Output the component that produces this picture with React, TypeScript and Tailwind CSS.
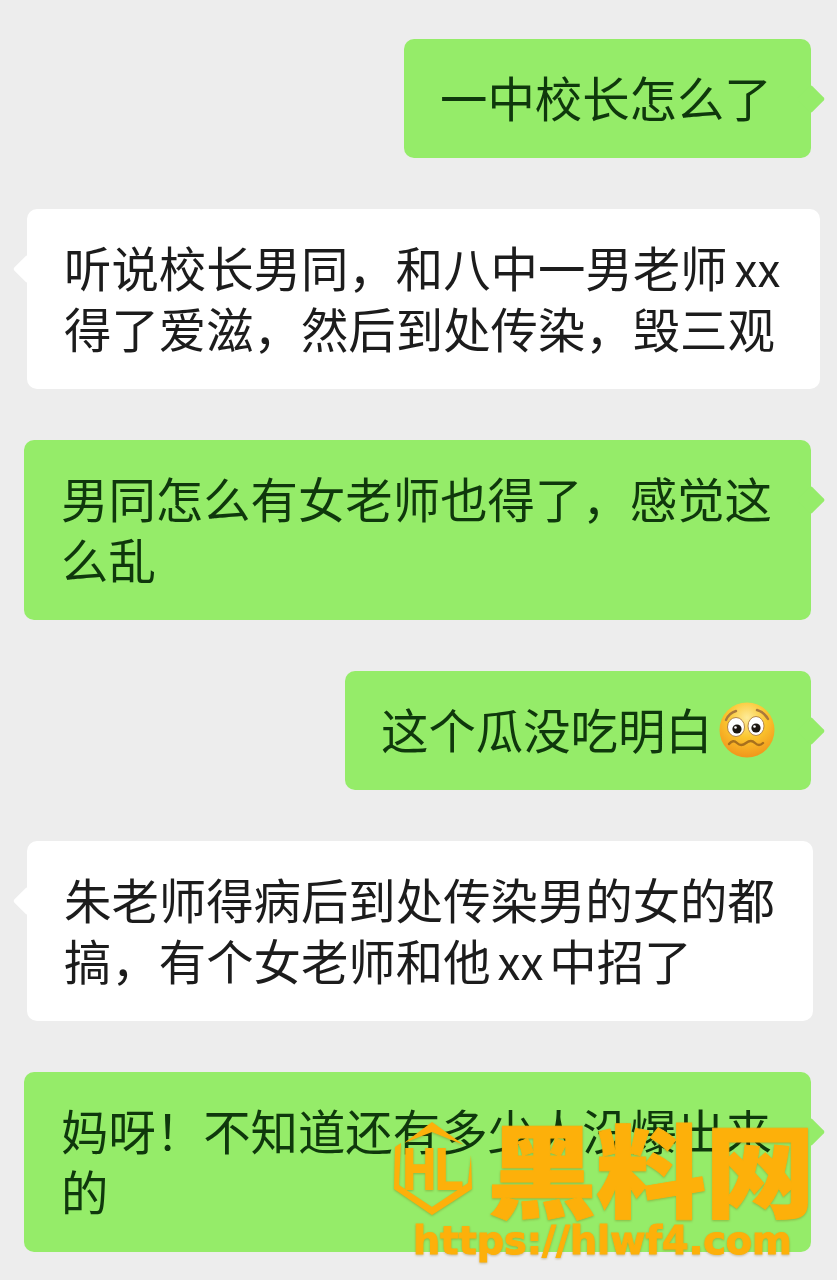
import React from 'react';

const cjk = { fontFamily: '"Noto Sans CJK SC", "Noto Sans", sans-serif' };

function Tail({ side, color }: { side: 'left' | 'right'; color: string }) {
  // little diamond poking out of the bubble's edge
  return (
    <span
      className={`absolute top-[60px] h-[20px] w-[20px] -translate-y-1/2 rotate-45 rounded-[2px] ${color} ${
        side === 'right' ? 'right-[-10px]' : 'left-[-10px]'
      }`}
    />
  );
}

function Bubble({ side, className, children }: { side: 'left' | 'right'; className: string; children: React.ReactNode }) {
  const color = side === 'right' ? 'bg-[#95ec69]' : 'bg-white';
  return (
    <div className={`relative rounded-[10px] pt-[28px] pb-[30px] text-[47.4px] leading-[60.5px] whitespace-nowrap ${color} ${side === 'right' ? 'text-[#0f380c]' : 'text-[#1c1c1c]'} ${className}`}>
      <Tail side={side} color={color} />
      <div className="relative blur-[0.4px]">{children}</div>
    </div>
  );
}

function Xx() {
  return <span className="ml-[7px] mr-[6px] text-[46px]">xx</span>;
}

function WorriedEmoji() {
  return (
    <svg viewBox="0 0 56 56" className="ml-[6px] h-[56px] w-[56px] shrink-0 translate-y-[1px]">
      <defs>
        <radialGradient id="face" cx="50%" cy="28%" r="74%">
          <stop offset="0%" stopColor="#fdeb9a" />
          <stop offset="48%" stopColor="#fbc62e" />
          <stop offset="100%" stopColor="#f0931a" />
        </radialGradient>
      </defs>
      <circle cx="28" cy="28" r="27.5" fill="url(#face)" />
      <path d="M7 18 Q10 11 17 9" fill="none" stroke="#a9793c" strokeWidth="2.4" strokeLinecap="round" />
      <path d="M38 8 Q45 10 49 17" fill="none" stroke="#a9793c" strokeWidth="2.4" strokeLinecap="round" />
      <ellipse cx="17" cy="25" rx="8.5" ry="9.5" fill="#fff" stroke="#a9793c" strokeWidth="0.9" />
      <ellipse cx="37" cy="24" rx="8" ry="9.5" fill="#fff" stroke="#a9793c" strokeWidth="0.9" />
      <circle cx="18" cy="27" r="4.6" fill="#1c1710" />
      <circle cx="37" cy="26" r="4.6" fill="#1c1710" />
      <circle cx="16.5" cy="25.5" r="1.3" fill="#fff" />
      <circle cx="35.5" cy="24.5" r="1.3" fill="#fff" />
      <path d="M10 42 Q14 37 18 41 T27 41 T36 41 T44 41" fill="none" stroke="#a8701c" strokeWidth="2.4" strokeLinecap="round" />
    </svg>
  );
}

function Watermark() {
  return (
    <div className="absolute left-[392px] top-[1116px] w-[440px] text-[#fdb00a] drop-shadow-[0_1px_1px_rgba(120,90,0,0.35)]">
      <div className="flex h-[100px] items-center">
        <svg viewBox="0 0 82 98" className="h-[98px] w-[82px] shrink-0">
          <path d="M12 26 L40 5 L72 28 L40 15 Z" fill="currentColor" />
          <path d="M3 30 L9 26 L7 68 L40 90 L76 66 L79 38 L80 72 L40 98 L2 72 Z" fill="currentColor" />
          <text x="41" y="72" textAnchor="middle" fontFamily="Liberation Sans" fontWeight="700" fontSize="58" fill="currentColor" stroke="currentColor" strokeWidth="2" textLength="60" lengthAdjust="spacingAndGlyphs">HL</text>
        </svg>
        <span style={cjk} className="ml-[13px] scale-y-[0.92] text-[110px] leading-[100px] font-black tracking-[-1px] whitespace-nowrap [-webkit-text-stroke:1px_#fdb00a]">黑料网</span>
      </div>
      <p className="ml-[21px] mt-[3px] font-['DejaVu_Sans'] text-[38.2px] leading-[44px] font-bold whitespace-nowrap [-webkit-text-stroke:1px_#fdb00a]">https://hlwf4.com</p>
    </div>
  );
}

export default function App() {
  return (
    <div style={cjk} className="relative flex h-[1280px] w-[837px] flex-col gap-[51px] overflow-hidden bg-[#ededed] pt-[39px]">
      <Bubble side="right" className="h-[119px] ml-[404px] w-[407px] pl-[36px]">一中校长怎么了</Bubble>
      <Bubble side="left" className="h-[180px] ml-[27px] w-[793px] pl-[37px]">
        听说校长男同，和八中一男老师<Xx />
        <br />
        得了爱滋，然后到处传染，毁三观
      </Bubble>
      <Bubble side="right" className="h-[180px] ml-[24px] w-[787px] pl-[37px]">
        男同怎么有女老师也得了，感觉这
        <br />
        么乱
      </Bubble>
      <Bubble side="right" className="h-[119px] ml-[345px] w-[466px] pl-[36px]">
        <div className="flex items-center">
          这个瓜没吃明白
          <WorriedEmoji />
        </div>
      </Bubble>
      <Bubble side="left" className="h-[180px] ml-[27px] w-[786px] pl-[37px]">
        朱老师得病后到处传染男的女的都
        <br />
        搞，有个女老师和他<Xx />中招了
      </Bubble>
      <Bubble side="right" className="h-[180px] ml-[24px] w-[787px] pl-[37px]">
        妈呀！不知道还有多少人没爆出来
        <br />
        的
      </Bubble>
      <Watermark />
    </div>
  );
}
